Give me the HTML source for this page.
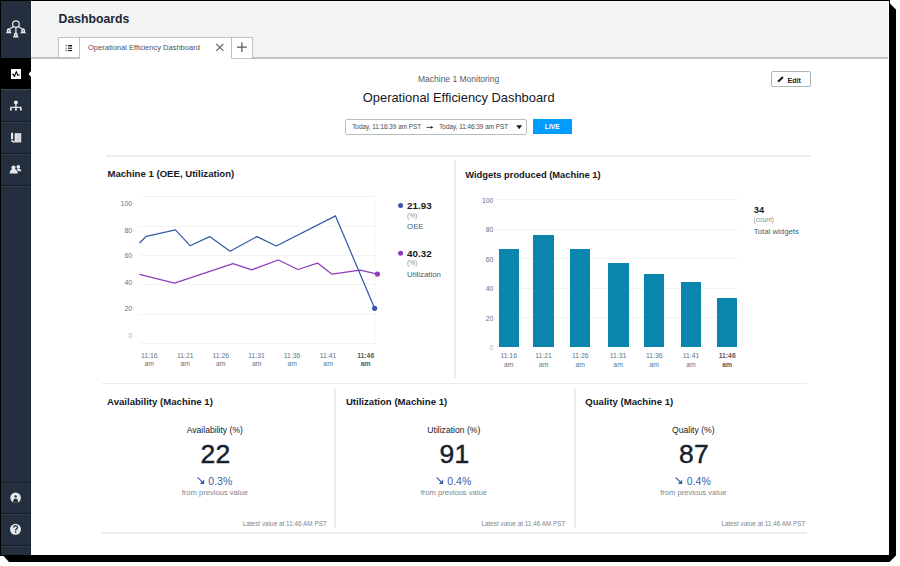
<!DOCTYPE html>
<html><head><meta charset="utf-8">
<style>
*{box-sizing:border-box;margin:0;padding:0}
html,body{width:900px;height:566px;overflow:hidden;background:#fff;font-family:"Liberation Sans",sans-serif;position:relative}
.a{position:absolute;white-space:nowrap}
</style></head><body>
<svg class="a" style="left:0;top:0" width="900" height="566"><polygon points="890,3.5 896,9.5 896,555.5 889.5,562 9,562 3.5,556 890,556" fill="#000"/><rect x="0" y="0" width="890" height="556" fill="#000"/></svg>
<div class="a" style="left:1px;top:1px;width:888px;height:554px;background:#fff;"></div>
<div class="a" style="left:1px;top:1px;width:29px;height:554px;background:#232f3e;"></div>
<div class="a" style="left:30px;top:1px;width:1px;height:554px;background:#1b2431;"></div>
<svg class="a" style="left:1px;top:1px" width="30" height="57" viewBox="1 1 30 57">
<g stroke="#e6e8ea" fill="none" stroke-width="1.25">
<circle cx="15.9" cy="24.1" r="3.3"/>
<path d="M15.9 27.4 V33 M13.4 26.4 L10 28.8 M18.4 26.4 L21.8 28.8"/>
</g>
<g fill="#e6e8ea"><path d="M5.85 33.30 H11.65 Q11.25 32.20 10.65 31.40 V30.20 A1.9 1.9 0 0 0 6.85 30.20 V31.40 Q6.25 32.20 5.85 33.30 Z"/><path d="M20.20 33.30 H26.00 Q25.60 32.20 25.00 31.40 V30.20 A1.9 1.9 0 0 0 21.20 30.20 V31.40 Q20.60 32.20 20.20 33.30 Z"/><path d="M12.90 37.50 H18.70 Q18.30 36.40 17.70 35.60 V34.40 A1.9 1.9 0 0 0 13.90 34.40 V35.60 Q13.30 36.40 12.90 37.50 Z"/></g>
<g fill="#232f3e"><circle cx="8.75" cy="30.9" r="0.6"/><circle cx="23.1" cy="30.9" r="0.6"/><circle cx="15.8" cy="35.1" r="0.6"/></g></svg>
<div class="a" style="left:1px;top:58px;width:30px;height:31px;background:#000;"></div>
<div class="a" style="left:10.6px;top:68.8px;width:10.6px;height:10.6px;background:#fff;"></div>
<svg class="a" style="left:0;top:0" width="40" height="90"><path d="M12.2 74.2 L13.2 74.2 L14.4 76.6 L16.3 71.6 L17.8 75.2 L19.6 75" stroke="#000" stroke-width="1.1" fill="none" stroke-linejoin="round"/><polygon points="31.2,70.8 28.6,74 31.2,77.2" fill="#fff"/></svg>
<div class="a" style="left:1px;top:89px;width:29px;height:1px;background:#3a4859;"></div>
<div class="a" style="left:1px;top:120.5px;width:29px;height:1px;background:#161e29;"></div>
<div class="a" style="left:1px;top:121.5px;width:29px;height:1px;background:#2c3a4b;"></div>
<div class="a" style="left:1px;top:152.5px;width:29px;height:1px;background:#161e29;"></div>
<div class="a" style="left:1px;top:153.5px;width:29px;height:1px;background:#2c3a4b;"></div>
<div class="a" style="left:1px;top:184.5px;width:29px;height:1px;background:#161e29;"></div>
<div class="a" style="left:1px;top:185.5px;width:29px;height:1px;background:#2c3a4b;"></div>
<div class="a" style="left:1px;top:482px;width:29px;height:1px;background:#161e29;"></div>
<div class="a" style="left:1px;top:483px;width:29px;height:1px;background:#2c3a4b;"></div>
<div class="a" style="left:1px;top:513px;width:29px;height:1px;background:#161e29;"></div>
<div class="a" style="left:1px;top:514px;width:29px;height:1px;background:#2c3a4b;"></div>
<div class="a" style="left:1px;top:544.5px;width:29px;height:1px;background:#161e29;"></div>
<div class="a" style="left:1px;top:545.5px;width:29px;height:1px;background:#2c3a4b;"></div>
<svg class="a" style="left:0;top:90px" width="31" height="31" viewBox="0 90 31 31">
<g fill="#e6e8ea" stroke="#e6e8ea"><circle cx="15.9" cy="102.4" r="2" stroke="none"/>
<path d="M15.9 103 V109.2 M10.9 109.4 V107.3 H20.9 V109.4" fill="none" stroke-width="1.25"/>
<circle cx="10.9" cy="109.6" r="1.1" stroke="none"/><circle cx="15.9" cy="109.6" r="1.1" stroke="none"/><circle cx="20.9" cy="109.6" r="1.1" stroke="none"/></g></svg>
<svg class="a" style="left:0;top:122px" width="31" height="31" viewBox="0 122 31 31">
<g fill="#e6e8ea"><path d="M11 133.4 Q11 132.4 12 132.4 Q13.1 132.4 13.1 133.4 V139.3 H11 Z"/>
<rect x="14.7" y="133.2" width="6.5" height="9.2"/>
<path d="M11 140 Q11 142.4 13.2 142.4 H14.7 V140.8 H13.2 Q12.2 140.8 12.2 140 Z"/></g>
<rect x="16.6" y="134.3" width="3.8" height="7.2" fill="#d0d4d8"/></svg>
<svg class="a" style="left:0;top:154px" width="31" height="31" viewBox="0 154 31 31">
<g fill="#e6e8ea">
<circle cx="18.3" cy="166.9" r="1.8"/>
<path d="M16.6 169 Q18.3 168.2 20 169 Q21.3 169.8 21.4 171.3 H17.8 Q17.6 170 16.6 169 Z"/>
</g><g fill="#232f3e" stroke="#232f3e" stroke-width="0.9"><circle cx="13.5" cy="167.6" r="2.1"/>
<path d="M9.6 173.4 Q9.9 169.2 13.5 168.8 Q17.4 169.2 17.8 173.4 Z"/></g><g fill="#e6e8ea"><circle cx="13.5" cy="167.6" r="2.1"/>
<path d="M9.6 173.4 Q9.9 169.2 13.5 168.8 Q17.4 169.2 17.8 173.4 Z"/></g></svg>
<svg class="a" style="left:0;top:483px" width="31" height="31" viewBox="0 483 31 31">
<circle cx="15.6" cy="497.7" r="5.3" fill="#e6e8ea"/>
<circle cx="15.6" cy="496.4" r="1.2" fill="#232f3e"/>
<path d="M13 502.8 Q13.1 498.4 15.6 498.4 Q18.1 498.4 18.2 502.8 Z" fill="#232f3e"/></svg>
<svg class="a" style="left:0;top:514px" width="31" height="31" viewBox="0 514 31 31">
<circle cx="15.5" cy="529.3" r="5.5" fill="#e6e8ea"/>
<path d="M13.6 527.6 Q13.7 525.6 15.6 525.6 Q17.5 525.7 17.5 527.4 Q17.4 528.5 16.3 529.1 Q15.6 529.5 15.6 530.4" stroke="#232f3e" stroke-width="1.3" fill="none"/>
<rect x="14.9" y="531.3" width="1.4" height="1.4" fill="#232f3e"/></svg>
<div class="a" style="left:31px;top:1px;width:1px;height:56px;background:#fff;"></div>
<div class="a" style="left:32px;top:1px;width:856px;height:56px;background:#f2f3f3;"></div>
<div class="a" style="left:888px;top:1px;width:1px;height:554px;background:#fff;"></div>
<div class="a" style="left:58.60px;top:12.93px;font-size:12.25px;line-height:12.25px;font-weight:bold;color:#1b2635;">Dashboards</div>
<div class="a" style="left:58px;top:37px;width:22px;height:21px;background:#fff;border:1px solid #bcc4c5;border-bottom:none"></div>
<div class="a" style="left:80px;top:37px;width:151.5px;height:22px;background:#fff;border-top:1px solid #bcc4c5"></div>
<div class="a" style="left:31px;top:57px;width:49px;height:1.8px;background:#bcc4c5;"></div>
<div class="a" style="left:231.3px;top:57px;width:657px;height:1.8px;background:#bcc4c5;"></div>
<div class="a" style="left:231.3px;top:37px;width:21.5px;height:22px;background:#fff;border:1px solid #bcc4c5"></div>
<svg class="a" style="left:0;top:0" width="260" height="60">
<g fill="#16191f"><rect x="65.6" y="45" width="1" height="1.1"/><rect x="65.6" y="47.7" width="1" height="1.1"/><rect x="65.6" y="50" width="1" height="1.1"/>
<rect x="68.1" y="45" width="4" height="1.1"/><rect x="68.1" y="46.3" width="4" height="0.8" opacity="0.6"/><rect x="68.1" y="47.7" width="4" height="1.1"/><rect x="68.1" y="50" width="4" height="1.1"/></g>
<path d="M216.2 43.8 L223.4 50.8 M223.4 43.8 L216.2 50.8" stroke="#545b64" stroke-width="1.05"/>
<path d="M237 47.2 H246.8 M241.9 42.3 V52.1" stroke="#545b64" stroke-width="1.25"/>
</svg>
<div class="a" style="left:88.00px;top:44.33px;font-size:7.52px;line-height:7.52px;color:#4b535c;">Operational Efficiency Dashboard</div>
<div class="a" style="left:158.60px;width:600px;text-align:center;top:74.50px;font-size:8.5px;line-height:8.5px;color:#545b64;">Machine 1 Monitoring</div>
<div class="a" style="left:158.70px;width:600px;text-align:center;top:91.98px;font-size:12.9px;line-height:12.9px;color:#16191f;">Operational Efficiency Dashboard</div>
<div class="a" style="left:771.3px;top:71.3px;width:39.7px;height:16px;border:1px solid #aab7b8;border-radius:2px;background:#fff"></div>
<svg class="a" style="left:770px;top:70px" width="20" height="20" viewBox="770 70 20 20"><path d="M777.6 82.2 L778.1 80.3 L782.1 76.3 L783.6 77.8 L779.6 81.8 Z" fill="#16191f"/></svg>
<div class="a" style="left:787.60px;top:76.67px;font-size:7.0px;line-height:7.0px;font-weight:bold;color:#16191f;">Edit</div>
<div class="a" style="left:345px;top:119.2px;width:181.5px;height:15.4px;border:1px solid #b5bfc0;border-radius:2px;background:#fff"></div>
<div class="a" style="left:352.20px;top:124.42px;font-size:6.35px;line-height:6.35px;color:#424a53;">Today, 11:16:39 am PST</div>
<svg class="a" style="left:420px;top:118px" width="110" height="18" viewBox="420 118 110 18"><path d="M426.6 127.4 H432.4" stroke="#16191f" stroke-width="0.8"/><path d="M430.9 126.1 L433.2 127.4 L430.9 128.7 Z" fill="#16191f"/><path d="M516.3 125.3 H522.1 L519.2 129.3 Z" fill="#16191f"/></svg>
<div class="a" style="left:439.20px;top:124.42px;font-size:6.35px;line-height:6.35px;color:#424a53;">Today, 11:46:39 am PST</div>
<div class="a" style="left:532.5px;top:118.7px;width:39.5px;height:15.5px;background:#009dff;"></div>
<div class="a" style="left:252.30px;width:600px;text-align:center;top:124.13px;font-size:6.7px;line-height:6.7px;font-weight:bold;color:#fff;">LIVE</div>
<div class="a" style="left:106.2px;top:155px;width:704.6px;height:1.8px;background:#eaeded;"></div>
<div class="a" style="left:454.3px;top:160.2px;width:1.5px;height:219px;background:#eaeded;"></div>
<div class="a" style="left:102.2px;top:382.6px;width:704.8px;height:1.8px;background:#eaeded;"></div>
<div class="a" style="left:334.3px;top:388px;width:1.5px;height:140px;background:#eaeded;"></div>
<div class="a" style="left:574px;top:388px;width:1.5px;height:140px;background:#eaeded;"></div>
<div class="a" style="left:102.2px;top:532px;width:704.8px;height:1.8px;background:#eaeded;"></div>
<div class="a" style="left:107.40px;top:169.07px;font-size:9.6px;line-height:9.6px;font-weight:bold;color:#16191f;">Machine 1 (OEE, Utilization)</div>
<div class="a" style="left:139.5px;top:196.0px;width:235px;height:1px;background:#f2f3f3;"></div>
<div class="a" style="left:139.5px;top:225.9px;width:235px;height:1px;background:#f2f3f3;"></div>
<div class="a" style="left:139.5px;top:255.1px;width:235px;height:1px;background:#f2f3f3;"></div>
<div class="a" style="left:139.5px;top:284.4px;width:235px;height:1px;background:#f2f3f3;"></div>
<div class="a" style="left:139.5px;top:314.0px;width:235px;height:1px;background:#f2f3f3;"></div>
<div class="a" style="left:139.5px;top:342.7px;width:235px;height:1px;background:#f2f3f3;"></div>
<div class="a" style="left:374.6px;top:195px;width:1px;height:150px;background:#f7f8f8;"></div>
<div class="a" style="left:-467.80px;width:600px;text-align:right;top:199.87px;font-size:7.0px;line-height:7.0px;color:#5f7387;">100</div>
<div class="a" style="left:-467.80px;width:600px;text-align:right;top:226.87px;font-size:7.0px;line-height:7.0px;color:#5f7387;">80</div>
<div class="a" style="left:-467.80px;width:600px;text-align:right;top:252.27px;font-size:7.0px;line-height:7.0px;color:#5f7387;">60</div>
<div class="a" style="left:-467.80px;width:600px;text-align:right;top:278.77px;font-size:7.0px;line-height:7.0px;color:#5f7387;">40</div>
<div class="a" style="left:-467.80px;width:600px;text-align:right;top:305.17px;font-size:7.0px;line-height:7.0px;color:#5f7387;">20</div>
<div class="a" style="left:-467.80px;width:600px;text-align:right;top:332.07px;font-size:7.0px;line-height:7.0px;color:#aab7b8;">0</div>
<div class="a" style="left:-150.70px;width:600px;text-align:center;top:353.14px;font-size:6.8px;line-height:6.8px;color:#5f7387;">11:16</div>
<div class="a" style="left:-150.70px;width:600px;text-align:center;top:361.34px;font-size:6.8px;line-height:6.8px;color:#5f7387;">am</div>
<div class="a" style="left:-114.70px;width:600px;text-align:center;top:353.14px;font-size:6.8px;line-height:6.8px;color:#5f7387;">11:21</div>
<div class="a" style="left:-114.70px;width:600px;text-align:center;top:361.34px;font-size:6.8px;line-height:6.8px;color:#5f7387;">am</div>
<div class="a" style="left:-79.20px;width:600px;text-align:center;top:353.14px;font-size:6.8px;line-height:6.8px;color:#5f7387;">11:26</div>
<div class="a" style="left:-79.20px;width:600px;text-align:center;top:361.34px;font-size:6.8px;line-height:6.8px;color:#5f7387;">am</div>
<div class="a" style="left:-43.40px;width:600px;text-align:center;top:353.14px;font-size:6.8px;line-height:6.8px;color:#5f7387;">11:31</div>
<div class="a" style="left:-43.40px;width:600px;text-align:center;top:361.34px;font-size:6.8px;line-height:6.8px;color:#5f7387;">am</div>
<div class="a" style="left:-7.90px;width:600px;text-align:center;top:353.14px;font-size:6.8px;line-height:6.8px;color:#5f7387;">11:36</div>
<div class="a" style="left:-7.90px;width:600px;text-align:center;top:361.34px;font-size:6.8px;line-height:6.8px;color:#5f7387;">am</div>
<div class="a" style="left:28.10px;width:600px;text-align:center;top:353.14px;font-size:6.8px;line-height:6.8px;color:#5f7387;">11:41</div>
<div class="a" style="left:28.10px;width:600px;text-align:center;top:361.34px;font-size:6.8px;line-height:6.8px;color:#5f7387;">am</div>
<div class="a" style="left:65.70px;width:600px;text-align:center;top:353.14px;font-size:6.8px;line-height:6.8px;font-weight:bold;color:#545b64;">11:46</div>
<div class="a" style="left:65.70px;width:600px;text-align:center;top:361.34px;font-size:6.8px;line-height:6.8px;font-weight:bold;color:#545b64;">am</div>
<svg class="a" style="left:0;top:0" width="460" height="380"><polyline points="139.5,274.3 174.5,283.1 233,263.6 251.8,269.8 278.3,260 298,269.5 317.5,263.1 332,274.2 360.1,270.1 377.4,274.1" fill="none" stroke="#8e3bbd" stroke-width="1.25" stroke-linejoin="round"/><polyline points="139.5,243 146.4,236.3 175.4,229.8 190.1,245.7 209.7,236.6 230,251.2 256.9,236.6 276.3,246 335.5,215.9 374.6,308.3" fill="none" stroke="#3759a9" stroke-width="1.25" stroke-linejoin="round"/><circle cx="374.6" cy="308.3" r="2.6" fill="#3759a9"/><circle cx="377.4" cy="274.1" r="2.6" fill="#8e3bbd"/><circle cx="400.6" cy="205.6" r="2.5" fill="#3759a9"/><circle cx="400.6" cy="253.2" r="2.5" fill="#8e3bbd"/></svg>
<div class="a" style="left:407.10px;top:200.80px;font-size:9.8px;line-height:9.8px;font-weight:bold;color:#16191f;">21.93</div>
<div class="a" style="left:407.10px;top:213.00px;font-size:6.5px;line-height:6.5px;color:#879596;">(%)</div>
<div class="a" style="left:407.10px;top:222.70px;font-size:7.8px;line-height:7.8px;color:#44607a;">OEE</div>
<div class="a" style="left:407.10px;top:248.60px;font-size:9.8px;line-height:9.8px;font-weight:bold;color:#16191f;">40.32</div>
<div class="a" style="left:407.10px;top:260.20px;font-size:6.5px;line-height:6.5px;color:#879596;">(%)</div>
<div class="a" style="left:407.10px;top:271.40px;font-size:7.8px;line-height:7.8px;color:#44607a;">Utilization</div>
<div class="a" style="left:465.20px;top:171.09px;font-size:9.35px;line-height:9.35px;font-weight:bold;color:#16191f;">Widgets produced (Machine 1)</div>
<div class="a" style="left:495.7px;top:199.0px;width:242px;height:1px;background:#f2f3f3;"></div>
<div class="a" style="left:-106.70px;width:600px;text-align:right;top:197.54px;font-size:6.8px;line-height:6.8px;color:#5f7387;">100</div>
<div class="a" style="left:495.7px;top:228.54px;width:242px;height:1px;background:#f2f3f3;"></div>
<div class="a" style="left:-106.70px;width:600px;text-align:right;top:227.08px;font-size:6.8px;line-height:6.8px;color:#5f7387;">80</div>
<div class="a" style="left:495.7px;top:258.08px;width:242px;height:1px;background:#f2f3f3;"></div>
<div class="a" style="left:-106.70px;width:600px;text-align:right;top:256.62px;font-size:6.8px;line-height:6.8px;color:#5f7387;">60</div>
<div class="a" style="left:495.7px;top:287.62px;width:242px;height:1px;background:#f2f3f3;"></div>
<div class="a" style="left:-106.70px;width:600px;text-align:right;top:286.16px;font-size:6.8px;line-height:6.8px;color:#5f7387;">40</div>
<div class="a" style="left:495.7px;top:317.15999999999997px;width:242px;height:1px;background:#f2f3f3;"></div>
<div class="a" style="left:-106.70px;width:600px;text-align:right;top:315.70px;font-size:6.8px;line-height:6.8px;color:#5f7387;">20</div>
<div class="a" style="left:-106.70px;width:600px;text-align:right;top:345.24px;font-size:6.8px;line-height:6.8px;color:#aab7b8;">0</div>
<div class="a" style="left:498.6px;top:249.4px;width:20.4px;height:97.79999999999998px;background:#0985ae;"></div>
<div class="a" style="left:533.3px;top:235.3px;width:20.4px;height:111.89999999999998px;background:#0985ae;"></div>
<div class="a" style="left:570px;top:249.4px;width:20.4px;height:97.79999999999998px;background:#0985ae;"></div>
<div class="a" style="left:608.2px;top:262.6px;width:20.4px;height:84.59999999999997px;background:#0985ae;"></div>
<div class="a" style="left:644px;top:274.1px;width:20.4px;height:73.09999999999997px;background:#0985ae;"></div>
<div class="a" style="left:680.7px;top:282.1px;width:20.4px;height:65.09999999999997px;background:#0985ae;"></div>
<div class="a" style="left:716.7px;top:298.2px;width:20.4px;height:49.0px;background:#0985ae;"></div>
<div class="a" style="left:208.70px;width:600px;text-align:center;top:353.44px;font-size:6.8px;line-height:6.8px;color:#5f7387;">11:16</div>
<div class="a" style="left:208.70px;width:600px;text-align:center;top:361.64px;font-size:6.8px;line-height:6.8px;color:#5f7387;">am</div>
<div class="a" style="left:243.60px;width:600px;text-align:center;top:353.44px;font-size:6.8px;line-height:6.8px;color:#5f7387;">11:21</div>
<div class="a" style="left:243.60px;width:600px;text-align:center;top:361.64px;font-size:6.8px;line-height:6.8px;color:#5f7387;">am</div>
<div class="a" style="left:280.30px;width:600px;text-align:center;top:353.44px;font-size:6.8px;line-height:6.8px;color:#5f7387;">11:26</div>
<div class="a" style="left:280.30px;width:600px;text-align:center;top:361.64px;font-size:6.8px;line-height:6.8px;color:#5f7387;">am</div>
<div class="a" style="left:318.10px;width:600px;text-align:center;top:353.44px;font-size:6.8px;line-height:6.8px;color:#5f7387;">11:31</div>
<div class="a" style="left:318.10px;width:600px;text-align:center;top:361.64px;font-size:6.8px;line-height:6.8px;color:#5f7387;">am</div>
<div class="a" style="left:354.30px;width:600px;text-align:center;top:353.44px;font-size:6.8px;line-height:6.8px;color:#5f7387;">11:36</div>
<div class="a" style="left:354.30px;width:600px;text-align:center;top:361.64px;font-size:6.8px;line-height:6.8px;color:#5f7387;">am</div>
<div class="a" style="left:391.00px;width:600px;text-align:center;top:353.44px;font-size:6.8px;line-height:6.8px;color:#5f7387;">11:41</div>
<div class="a" style="left:391.00px;width:600px;text-align:center;top:361.64px;font-size:6.8px;line-height:6.8px;color:#5f7387;">am</div>
<div class="a" style="left:427.20px;width:600px;text-align:center;top:353.44px;font-size:6.8px;line-height:6.8px;font-weight:bold;color:#545b64;">11:46</div>
<div class="a" style="left:427.20px;width:600px;text-align:center;top:361.64px;font-size:6.8px;line-height:6.8px;font-weight:bold;color:#545b64;">am</div>
<div class="a" style="left:753.80px;top:206.03px;font-size:9.3px;line-height:9.3px;font-weight:bold;color:#16191f;">34</div>
<div class="a" style="left:753.50px;top:217.21px;font-size:6.6px;line-height:6.6px;color:#879596;">(count)</div>
<div class="a" style="left:753.80px;top:227.50px;font-size:7.8px;line-height:7.8px;color:#44607a;">Total widgets</div>
<div class="a" style="left:107.10px;top:397.07px;font-size:9.6px;line-height:9.6px;font-weight:bold;color:#16191f;">Availability (Machine 1)</div>
<div class="a" style="left:-85.20px;width:600px;text-align:center;top:426.02px;font-size:8.6px;line-height:8.6px;color:#16191f;">Availability (%)</div>
<div class="a" style="left:-84.40px;width:600px;text-align:center;top:441.17px;font-size:26.5px;line-height:26.5px;color:#16202f;letter-spacing:0.3px;-webkit-text-stroke:0.45px #16202f;">22</div>
<div class="a" style="left:-79.70px;width:600px;text-align:center;top:475.91px;font-size:10.5px;line-height:10.5px;color:#3b5ea8;">0.3%</div>
<svg class="a" style="left:195.8px;top:476px" width="10" height="10" viewBox="0 0 10 10"><path d="M1.6 1.4 L7.4 7.2" stroke="#3b5ea8" stroke-width="1.2"/><path d="M8.2 3.6 V8 H3.8 Z" fill="#3b5ea8"/></svg>
<div class="a" style="left:-85.20px;width:600px;text-align:center;top:489.27px;font-size:7.6px;line-height:7.6px;color:#7b878e;">from previous value</div>
<div class="a" style="left:-273.20px;width:600px;text-align:right;top:521.38px;font-size:6.4px;line-height:6.4px;color:#7b878e;">Latest value at 11:46 AM PST</div>
<div class="a" style="left:345.90px;top:397.07px;font-size:9.6px;line-height:9.6px;font-weight:bold;color:#16191f;">Utilization (Machine 1)</div>
<div class="a" style="left:153.80px;width:600px;text-align:center;top:426.02px;font-size:8.6px;line-height:8.6px;color:#16191f;">Utilization (%)</div>
<div class="a" style="left:154.60px;width:600px;text-align:center;top:441.17px;font-size:26.5px;line-height:26.5px;color:#16202f;letter-spacing:0.3px;-webkit-text-stroke:0.45px #16202f;">91</div>
<div class="a" style="left:159.30px;width:600px;text-align:center;top:475.91px;font-size:10.5px;line-height:10.5px;color:#3b5ea8;">0.4%</div>
<svg class="a" style="left:434.8px;top:476px" width="10" height="10" viewBox="0 0 10 10"><path d="M1.6 1.4 L7.4 7.2" stroke="#3b5ea8" stroke-width="1.2"/><path d="M8.2 3.6 V8 H3.8 Z" fill="#3b5ea8"/></svg>
<div class="a" style="left:153.80px;width:600px;text-align:center;top:489.27px;font-size:7.6px;line-height:7.6px;color:#7b878e;">from previous value</div>
<div class="a" style="left:-34.50px;width:600px;text-align:right;top:521.38px;font-size:6.4px;line-height:6.4px;color:#7b878e;">Latest value at 11:46 AM PST</div>
<div class="a" style="left:585.30px;top:397.07px;font-size:9.6px;line-height:9.6px;font-weight:bold;color:#16191f;">Quality (Machine 1)</div>
<div class="a" style="left:393.30px;width:600px;text-align:center;top:426.02px;font-size:8.6px;line-height:8.6px;color:#16191f;">Quality (%)</div>
<div class="a" style="left:394.10px;width:600px;text-align:center;top:441.17px;font-size:26.5px;line-height:26.5px;color:#16202f;letter-spacing:0.3px;-webkit-text-stroke:0.45px #16202f;">87</div>
<div class="a" style="left:398.80px;width:600px;text-align:center;top:475.91px;font-size:10.5px;line-height:10.5px;color:#3b5ea8;">0.4%</div>
<svg class="a" style="left:674.3px;top:476px" width="10" height="10" viewBox="0 0 10 10"><path d="M1.6 1.4 L7.4 7.2" stroke="#3b5ea8" stroke-width="1.2"/><path d="M8.2 3.6 V8 H3.8 Z" fill="#3b5ea8"/></svg>
<div class="a" style="left:393.30px;width:600px;text-align:center;top:489.27px;font-size:7.6px;line-height:7.6px;color:#7b878e;">from previous value</div>
<div class="a" style="left:205.50px;width:600px;text-align:right;top:521.38px;font-size:6.4px;line-height:6.4px;color:#7b878e;">Latest value at 11:46 AM PST</div>
</body></html>
